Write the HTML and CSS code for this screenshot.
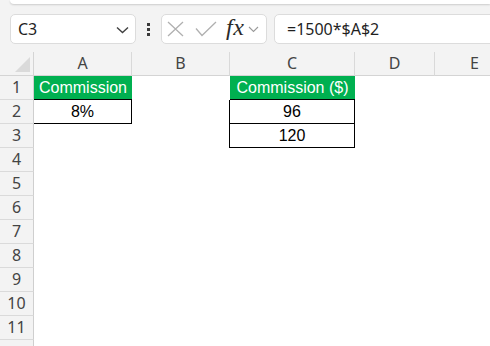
FILE: index.html
```html
<!DOCTYPE html>
<html>
<head>
<meta charset="utf-8">
<link rel="stylesheet" href="styles.css">
</head>
<body>
<div class="app">
  <div class="ribbon-edge"></div>
  <div class="formula-bar">
    <div class="name-box">
      <span class="name-text">C3</span>
      <svg class="nb-chev" width="13" height="8" viewBox="0 0 13 8"><polyline points="1,1.5 6.5,6.5 12,1.5" fill="none" stroke="#404040" stroke-width="1.4"/></svg>
    </div>
    <div class="dots"><i></i><i></i><i></i></div>
    <div class="fx-group">
      <svg class="ico-x" width="17" height="16" viewBox="0 0 17 16"><path d="M1 1 L16 15 M16 1 L1 15" stroke="#b0b0b0" stroke-width="1.3" fill="none"/></svg>
      <svg class="ico-check" width="22" height="16" viewBox="0 0 22 16"><polyline points="1,7.5 7,14.5 21,1" fill="none" stroke="#b0b0b0" stroke-width="1.3"/></svg>
      <span class="fx">fx</span>
      <svg class="fx-chev" width="11" height="7" viewBox="0 0 11 7"><polyline points="1,1 5.5,5.5 10,1" fill="none" stroke="#9a9a9a" stroke-width="1.1"/></svg>
    </div>
    <div class="formula-input">=1500*$A$2</div>
  </div>
  <div class="sheet">
    <div class="corner"><svg width="15" height="15" viewBox="0 0 15 15"><polygon points="15,0 15,15 0,15" fill="#dadada"/></svg></div>
    <div class="col-head">A</div>
    <div class="col-head">B</div>
    <div class="col-head">C</div>
    <div class="col-head">D</div>
    <div class="col-head">E</div>

    <div class="row-head">1</div>
    <div class="cell green">Commission</div>
    <div class="cell"></div>
    <div class="cell green">Commission ($)</div>
    <div class="cell"></div>
    <div class="cell"></div>

    <div class="row-head">2</div>
    <div class="cell box-a">8%</div>
    <div class="cell"></div>
    <div class="cell box-c">96</div>
    <div class="cell"></div>
    <div class="cell"></div>

    <div class="row-head">3</div>
    <div class="cell"></div>
    <div class="cell"></div>
    <div class="cell box-c">120</div>
    <div class="cell"></div>
    <div class="cell"></div>

    <div class="row-head">4</div>
    <div class="cell"></div><div class="cell"></div><div class="cell"></div><div class="cell"></div><div class="cell"></div>
    <div class="row-head">5</div>
    <div class="cell"></div><div class="cell"></div><div class="cell"></div><div class="cell"></div><div class="cell"></div>
    <div class="row-head">6</div>
    <div class="cell"></div><div class="cell"></div><div class="cell"></div><div class="cell"></div><div class="cell"></div>
    <div class="row-head">7</div>
    <div class="cell"></div><div class="cell"></div><div class="cell"></div><div class="cell"></div><div class="cell"></div>
    <div class="row-head">8</div>
    <div class="cell"></div><div class="cell"></div><div class="cell"></div><div class="cell"></div><div class="cell"></div>
    <div class="row-head">9</div>
    <div class="cell"></div><div class="cell"></div><div class="cell"></div><div class="cell"></div><div class="cell"></div>
    <div class="row-head">10</div>
    <div class="cell"></div><div class="cell"></div><div class="cell"></div><div class="cell"></div><div class="cell"></div>
    <div class="row-head">11</div>
    <div class="cell"></div><div class="cell"></div><div class="cell"></div><div class="cell"></div><div class="cell"></div>
    <div class="row-head"></div>
    <div class="cell"></div><div class="cell"></div><div class="cell"></div><div class="cell"></div><div class="cell"></div>
  </div>
</div>
</body>
</html>
```

FILE: styles.css
```css
* { box-sizing: border-box; }
html, body {
  margin: 0;
  padding: 0;
  width: 490px;
  height: 346px;
  overflow: hidden;
  background: #f3f3f3;
}
.app {
  width: 490px;
  height: 346px;
  overflow: hidden;
  font-family: "Noto Sans", "DejaVu Sans", sans-serif;
}
.ribbon-edge {
  height: 4px;
  margin-left: 10px;
  background: #ffffff;
  border-bottom-left-radius: 8px;
  box-shadow: 0 1px 2px rgba(0, 0, 0, 0.16);
}
.formula-bar {
  display: flex;
  align-items: center;
  height: 30px;
  margin-top: 10px;
  padding-left: 10px;
  margin-right: -12px;
}
.name-box {
  width: 126px;
  height: 30px;
  background: #ffffff;
  border: 1px solid #dcdcdc;
  border-radius: 5px;
  display: flex;
  align-items: center;
  justify-content: space-between;
  padding: 0 6px 0 7px;
}
.name-text {
  font-size: 16px;
  color: #1f1f1f;
  line-height: 1;
}
.nb-chev { display: block; margin-top: 1px; }
.dots {
  display: flex;
  flex-direction: column;
  gap: 2px;
  margin: 0 11px 0 11px;
}
.dots i {
  display: block;
  width: 3px;
  height: 3px;
  background: #3a3a3a;
}
.fx-group {
  width: 106px;
  height: 30px;
  background: #ffffff;
  border: 1px solid #dcdcdc;
  border-radius: 5px;
  display: flex;
  align-items: center;
  padding-left: 5px;
}
.ico-x { display: block; }
.ico-check { display: block; margin-left: 11px; }
.fx {
  font-family: "Liberation Serif", "DejaVu Serif", serif;
  font-style: italic;
  font-size: 24px;
  color: #2a2a2a;
  margin-left: 9px;
  line-height: 1;
  margin-top: -4px;
  letter-spacing: 0.5px;
}
.fx-chev { display: block; margin-left: 4px; margin-top: 1px; }
.formula-input {
  flex: 1;
  height: 30px;
  margin-left: 7px;
  background: #ffffff;
  border: 1px solid #dcdcdc;
  border-radius: 5px;
  display: flex;
  align-items: center;
  padding-left: 12px;
  font-size: 16px;
  color: #1f1f1f;
}
.sheet {
  margin-top: 8px;
  display: grid;
  grid-template-columns: 34px 98px 98px 125px 80px 80px;
  grid-auto-rows: 24px;
}
.corner {
  border-right: 1px solid #d4d4d4;
  border-bottom: 1px solid #d4d4d4;
  display: flex;
  align-items: flex-end;
  justify-content: flex-end;
  padding: 0 3px 3px 0;
}
.corner svg { display: block; }
.col-head {
  border-right: 1px solid #d9d9d9;
  border-bottom: 1px solid #d4d4d4;
  text-align: center;
  font-size: 16px;
  line-height: 23px;
  color: #444444;
}
.row-head {
  border-right: 1px solid #cfcfcf;
  border-bottom: 1px solid #dadada;
  text-align: center;
  font-size: 16px;
  line-height: 23px;
  color: #444444;
}
.cell {
  background: #ffffff;
  font-family: "Liberation Sans", Arial, sans-serif;
  font-size: 16px;
  line-height: 23px;
  text-align: center;
  color: #000000;
  white-space: nowrap;
  padding-top: 1px;
}
.cell.green {
  background: #00b050;
  color: #ffffff;
  border-bottom: 1px solid #000000;
  line-height: 22px;
}
.cell.box-a {
  border-right: 1px solid #000000;
  border-bottom: 1px solid #000000;
  line-height: 22px;
}
.cell.box-c {
  margin-left: -1px;
  border-left: 1px solid #000000;
  border-right: 1px solid #000000;
  border-bottom: 1px solid #000000;
  line-height: 22px;
}
```
